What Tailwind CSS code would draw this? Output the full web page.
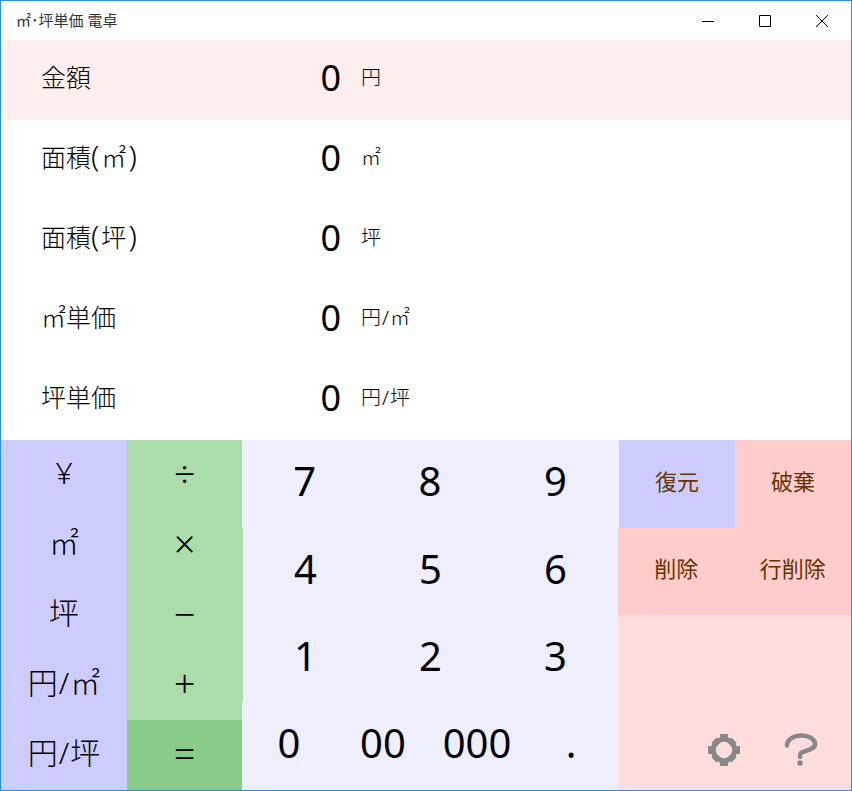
<!DOCTYPE html>
<html lang="ja">
<head>
    <meta charset="UTF-8">
    <title>㎡・坪単価 電卓</title>
    <script src="https://cdn.jsdelivr.net/npm/@tailwindcss/browser@4"></script>
</head>
<body class="bg-white overflow-hidden">
    <div class="w-[852px] h-[791px] border border-[#2b8fe0] flex flex-col font-['Noto_Sans','Noto_Sans_CJK_JP',sans-serif] font-light text-black">
        <!-- Title bar -->
        <div class="h-[39px] flex items-center justify-between shrink-0">
            <span class="pl-[15px] text-[15px] font-normal text-[#333]">㎡･坪単価 電卓</span>
            <div class="flex pr-[1px]">
                <div class="w-[57px] h-[39px] flex items-center justify-center">
                    <svg width="12" height="12" viewBox="0 0 12 12"><path d="M0 6.5H12" stroke="#000" fill="none"/></svg>
                </div>
                <div class="w-[57px] h-[39px] flex items-center justify-center">
                    <svg width="12" height="12" viewBox="0 0 12 12"><path d="M.5.5H11.5V11.5H.5Z" stroke="#000" fill="none"/></svg>
                </div>
                <div class="w-[57px] h-[39px] flex items-center justify-center">
                    <svg width="12" height="12" viewBox="0 0 12 12"><path d="M0 0L12 12M12 0L0 12" stroke="#000" fill="none"/></svg>
                </div>
            </div>
        </div>

        <!-- Result rows -->
        <div class="h-[80px] flex items-center bg-[#ffeeee] shrink-0 pb-[4px]">
            <span class="w-[300px] pl-[40px] text-[25px]">金額</span>
            <span class="w-[40px] text-right text-[36px] leading-none font-normal">0</span>
            <span class="pl-[20px] text-[20px]">円</span>
        </div>
        <div class="h-[80px] flex items-center shrink-0 pb-[4px]">
            <span class="w-[300px] pl-[40px] text-[25px]">面積<span class="text-[30px] leading-none">(</span><span class="px-[2px]">㎡</span><span class="text-[30px] leading-none">)</span></span>
            <span class="w-[40px] text-right text-[36px] leading-none font-normal">0</span>
            <span class="pl-[20px] text-[20px]">㎡</span>
        </div>
        <div class="h-[80px] flex items-center shrink-0 pb-[4px]">
            <span class="w-[300px] pl-[40px] text-[25px]">面積<span class="text-[30px] leading-none">(</span><span class="px-[2px]">坪</span><span class="text-[30px] leading-none">)</span></span>
            <span class="w-[40px] text-right text-[36px] leading-none font-normal">0</span>
            <span class="pl-[20px] text-[20px]">坪</span>
        </div>
        <div class="h-[80px] flex items-center shrink-0 pb-[4px]">
            <span class="w-[300px] pl-[40px] text-[25px]">㎡単価</span>
            <span class="w-[40px] text-right text-[36px] leading-none font-normal">0</span>
            <span class="pl-[20px] text-[20px]">円<span class="px-[1px]">/</span>㎡</span>
        </div>
        <div class="h-[80px] flex items-center shrink-0 pb-[4px]">
            <span class="w-[300px] pl-[40px] text-[25px]">坪単価</span>
            <span class="w-[40px] text-right text-[36px] leading-none font-normal">0</span>
            <span class="pl-[20px] text-[20px]">円<span class="px-[1px]">/</span>坪</span>
        </div>

        <!-- Keypad -->
        <div class="flex flex-1">
            <!-- Units -->
            <div class="w-[126px] grid grid-rows-5 bg-[#ccccff] text-[30px]">
                <div class="flex items-center justify-center pb-[6px]">¥</div>
                <div class="flex items-center justify-center pb-[6px]">㎡</div>
                <div class="flex items-center justify-center pb-[6px]">坪</div>
                <div class="flex items-center justify-center pb-[6px]">円<span class="px-[1px]">/</span>㎡</div>
                <div class="flex items-center justify-center pb-[6px]">円<span class="px-[1px]">/</span>坪</div>
            </div>

            <!-- Operators -->
            <div class="w-[115px] flex flex-col bg-[#aaddaa] text-[38px]">
                <div class="h-[70px] flex items-center justify-center pb-[4px]">÷</div>
                <div class="h-[70px] flex items-center justify-center pb-[4px]">×</div>
                <div class="h-[70px] flex items-center justify-center pb-[4px]">−</div>
                <div class="h-[70px] flex items-center justify-center pb-[4px]">+</div>
                <div class="h-[70px] flex items-center justify-center pb-[4px] bg-[#88cc88]">=</div>
            </div>

            <!-- Digits -->
            <div class="w-[376px] flex flex-col bg-[#eeeeff] text-[40px] font-normal">
                <div class="h-[88px] grid grid-cols-3">
                    <div class="flex items-center justify-center pb-[6px]">7</div>
                    <div class="flex items-center justify-center pb-[6px]">8</div>
                    <div class="flex items-center justify-center pb-[6px]">9</div>
                </div>
                <div class="h-[87px] grid grid-cols-3 border-l border-[#aaddaa]">
                    <div class="flex items-center justify-center pb-[6px]">4</div>
                    <div class="flex items-center justify-center pb-[6px]">5</div>
                    <div class="flex items-center justify-center pb-[6px]">6</div>
                </div>
                <div class="h-[87px] grid grid-cols-3 border-l border-[#aaddaa]">
                    <div class="flex items-center justify-center pb-[6px]">1</div>
                    <div class="flex items-center justify-center pb-[6px]">2</div>
                    <div class="flex items-center justify-center pb-[6px]">3</div>
                </div>
                <div class="h-[88px] grid grid-cols-4">
                    <div class="flex items-center justify-center pb-[6px]">0</div>
                    <div class="flex items-center justify-center pb-[6px]">00</div>
                    <div class="flex items-center justify-center pb-[6px]">000</div>
                    <div class="flex items-center justify-center pb-[6px]">.</div>
                </div>
            </div>

            <!-- Edit buttons -->
            <div class="flex-1 flex flex-col bg-[#ffdddd] text-[22px] font-normal text-[#663300]">
                <div class="h-[88px] grid grid-cols-2 bg-[#ffcccc] border-l border-[#eeeeff]">
                    <div class="flex items-center justify-center pb-[6px] bg-[#ccccff]">復元</div>
                    <div class="flex items-center justify-center pb-[6px]">破棄</div>
                </div>
                <div class="h-[87px] grid grid-cols-2 bg-[#ffcccc]">
                    <div class="flex items-center justify-center pb-[6px]">削除</div>
                    <div class="flex items-center justify-center pb-[6px]">行削除</div>
                </div>
                <div class="flex-1 flex items-end justify-end gap-[43px] pr-[33px] pb-[23px]">
                    <svg width="34" height="34" viewBox="0 0 34 34">
                        <circle cx="17" cy="17" r="10.75" fill="none" stroke="#888" stroke-width="5"/>
                        <path d="M13 1H21V7H13ZM13 27H21V33H13ZM1 13H7V21H1ZM27 13H33V21H27ZM4.5 9.5L9.5 4.5L14 9L9 14ZM24.5 4.5L29.5 9.5L25 14L20 9ZM4.5 24.5L9.5 29.5L14 25L9 20ZM29.5 24.5L24.5 29.5L20 25L25 20Z" fill="#888"/>
                    </svg>
                    <svg width="34" height="34" viewBox="0 0 34 34">
                        <path d="M3 12.5C3 6 10 2.5 17.5 2.5C25 2.5 31 6 31 11C31 16.5 23 17 17.5 19.5C16 20.2 16 22 16 24" fill="none" stroke="#888" stroke-width="4.5" stroke-linecap="round"/>
                        <circle cx="16" cy="30" r="2.8" fill="#888"/>
                    </svg>
                </div>
            </div>
        </div>
    </div>
</body>
</html>
